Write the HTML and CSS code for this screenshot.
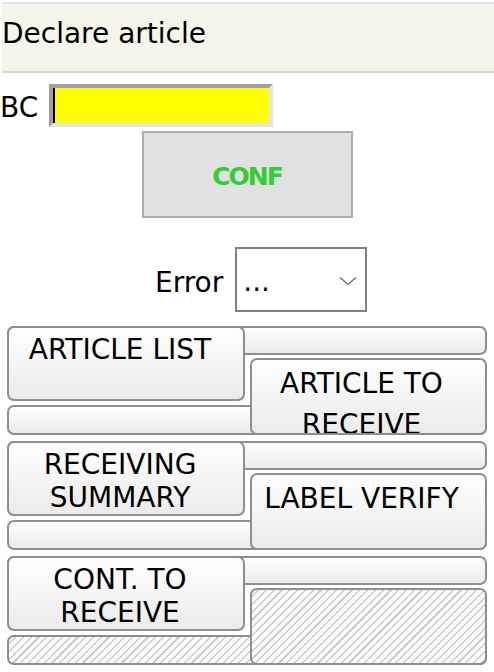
FILE: index.html
```html
<!DOCTYPE html>
<html>
    <head>
        <meta charset="UTF-8">
        <title>Declare article</title>
        <link rel="stylesheet" href="styles.css">
    </head>
    <body>
        <div class="title">Declare article</div>
        <div class="bc-row">
            <label for="bc" class="bc-label">BC</label>
            <input type="text" id="bc" class="bc-input">
        </div>
        <button class="conf">CONF</button>
        <div class="err-row">
            <label for="err" class="err-label">Error</label>
            <span class="sel-wrap">
                <select id="err" class="err-sel">
                    <option>...</option>
                </select>
                <svg class="chev" width="18" height="10" viewBox="0 0 18 10"><path d="M1 1.5 L9 8.5 L17 1.5" fill="none" stroke="#666" stroke-width="1.3"/></svg>
            </span>
        </div>
        <div class="menu">
            <div class="menu-row">
                <div class="strip strip-top"></div>
                <div class="strip strip-bottom"></div>
                <button class="m-btn m-left">ARTICLE LIST</button>
                <button class="m-btn m-right">ARTICLE TO RECEIVE</button>
            </div>
            <div class="menu-row">
                <div class="strip strip-top"></div>
                <div class="strip strip-bottom"></div>
                <button class="m-btn m-left">RECEIVING SUMMARY</button>
                <button class="m-btn m-right">LABEL VERIFY</button>
            </div>
            <div class="menu-row">
                <div class="strip strip-top"></div>
                <div class="strip strip-bottom hatch"></div>
                <button class="m-btn m-left">CONT. TO RECEIVE</button>
                <button class="m-btn m-right hatch" disabled></button>
            </div>
        </div>
    </body>
</html>
```
FILE: styles.css
```css
body {
    margin: 0;
    font-family: "DejaVu Sans", Verdana, sans-serif;
    font-size: 28px;
    color: #000;
    background: #fff;
}
.title {
    margin: 2px 0 0 2px;
    height: 53px;
    padding-top: 14px;
    line-height: 32px;
    background: #f5f5eb;
    border-top: 2px solid #e3e3e3;
    border-bottom: 2px solid #d6d6d6;
}
.bc-row {
    display: flex;
    align-items: center;
    margin-top: 11px;
}
.bc-label {
    line-height: 32px;
    padding-top: 4px;
    margin-right: 11px;
}
.bc-input {
    box-sizing: border-box;
    width: 224px;
    height: 43px;
    margin: 0;
    border: 4px solid;
    border-color: #a0a0a0 #e3e3e3 #e3e3e3 #a0a0a0;
    background: #ffff00;
    box-shadow: inset 2px 0 0 #000;
    outline: none;
}
.conf {
    display: block;
    box-sizing: border-box;
    width: 211px;
    height: 87px;
    margin: 4px auto 0;
    padding: 4px 0 0;
    border: 2px solid #adadad;
    background: #e1e1e1;
    color: #32cd32;
    font-family: "DejaVu Sans", Verdana, sans-serif;
    font-weight: bold;
    font-size: 25px;
    letter-spacing: -2px;
}
.err-row {
    display: flex;
    align-items: center;
    margin-top: 29px;
    padding-left: 155px;
}
.err-label {
    line-height: 32px;
    margin-top: 6px;
    margin-right: 12px;
}
.sel-wrap {
    position: relative;
    display: block;
}
.err-sel {
    display: block;
    box-sizing: border-box;
    width: 132px;
    height: 65px;
    margin: 0;
    padding: 4px 0 0 6px;
    border: 2px solid #808080;
    border-radius: 0;
    background: #fff;
    font-family: "DejaVu Sans", Verdana, sans-serif;
    font-size: 28px;
    color: #000;
    appearance: none;
    -webkit-appearance: none;
}
.chev {
    position: absolute;
    right: 10px;
    top: 29px;
}
.menu {
    display: flex;
    flex-direction: column;
    gap: 6px;
    margin-top: 14px;
    padding: 0 7px;
}
.menu-row {
    display: grid;
    grid-template-columns: 238px 1fr;
    grid-template-rows: 29px 46px 34px;
    column-gap: 5px;
}
.strip,
.m-btn {
    box-sizing: border-box;
    border: 2px solid #8e8e8e;
    border-radius: 7px;
    background: linear-gradient(#fefefe, #ebebeb);
}
.strip-top {
    grid-column: 1 / 3;
    grid-row: 1;
}
.strip-bottom {
    grid-column: 1 / 3;
    grid-row: 3;
    margin-top: 4px;
}
.m-btn {
    display: flex;
    justify-content: center;
    align-items: flex-start;
    margin: 0;
    overflow: hidden;
    font-family: "DejaVu Sans", Verdana, sans-serif;
    font-size: 28px;
    color: #000;
    text-align: center;
}
.m-left {
    grid-column: 1;
    grid-row: 1 / 3;
    padding: 5px 12px 0 0;
    line-height: 33px;
}
.m-right {
    grid-column: 2;
    grid-row: 2 / 4;
    margin-top: 3px;
    padding: 3px 14px 0 0;
    line-height: 41px;
}
.hatch {
    background: repeating-linear-gradient(135deg, #fcfcfc 0 4px, #cdcdcd 4px 5.5px);
}
```
